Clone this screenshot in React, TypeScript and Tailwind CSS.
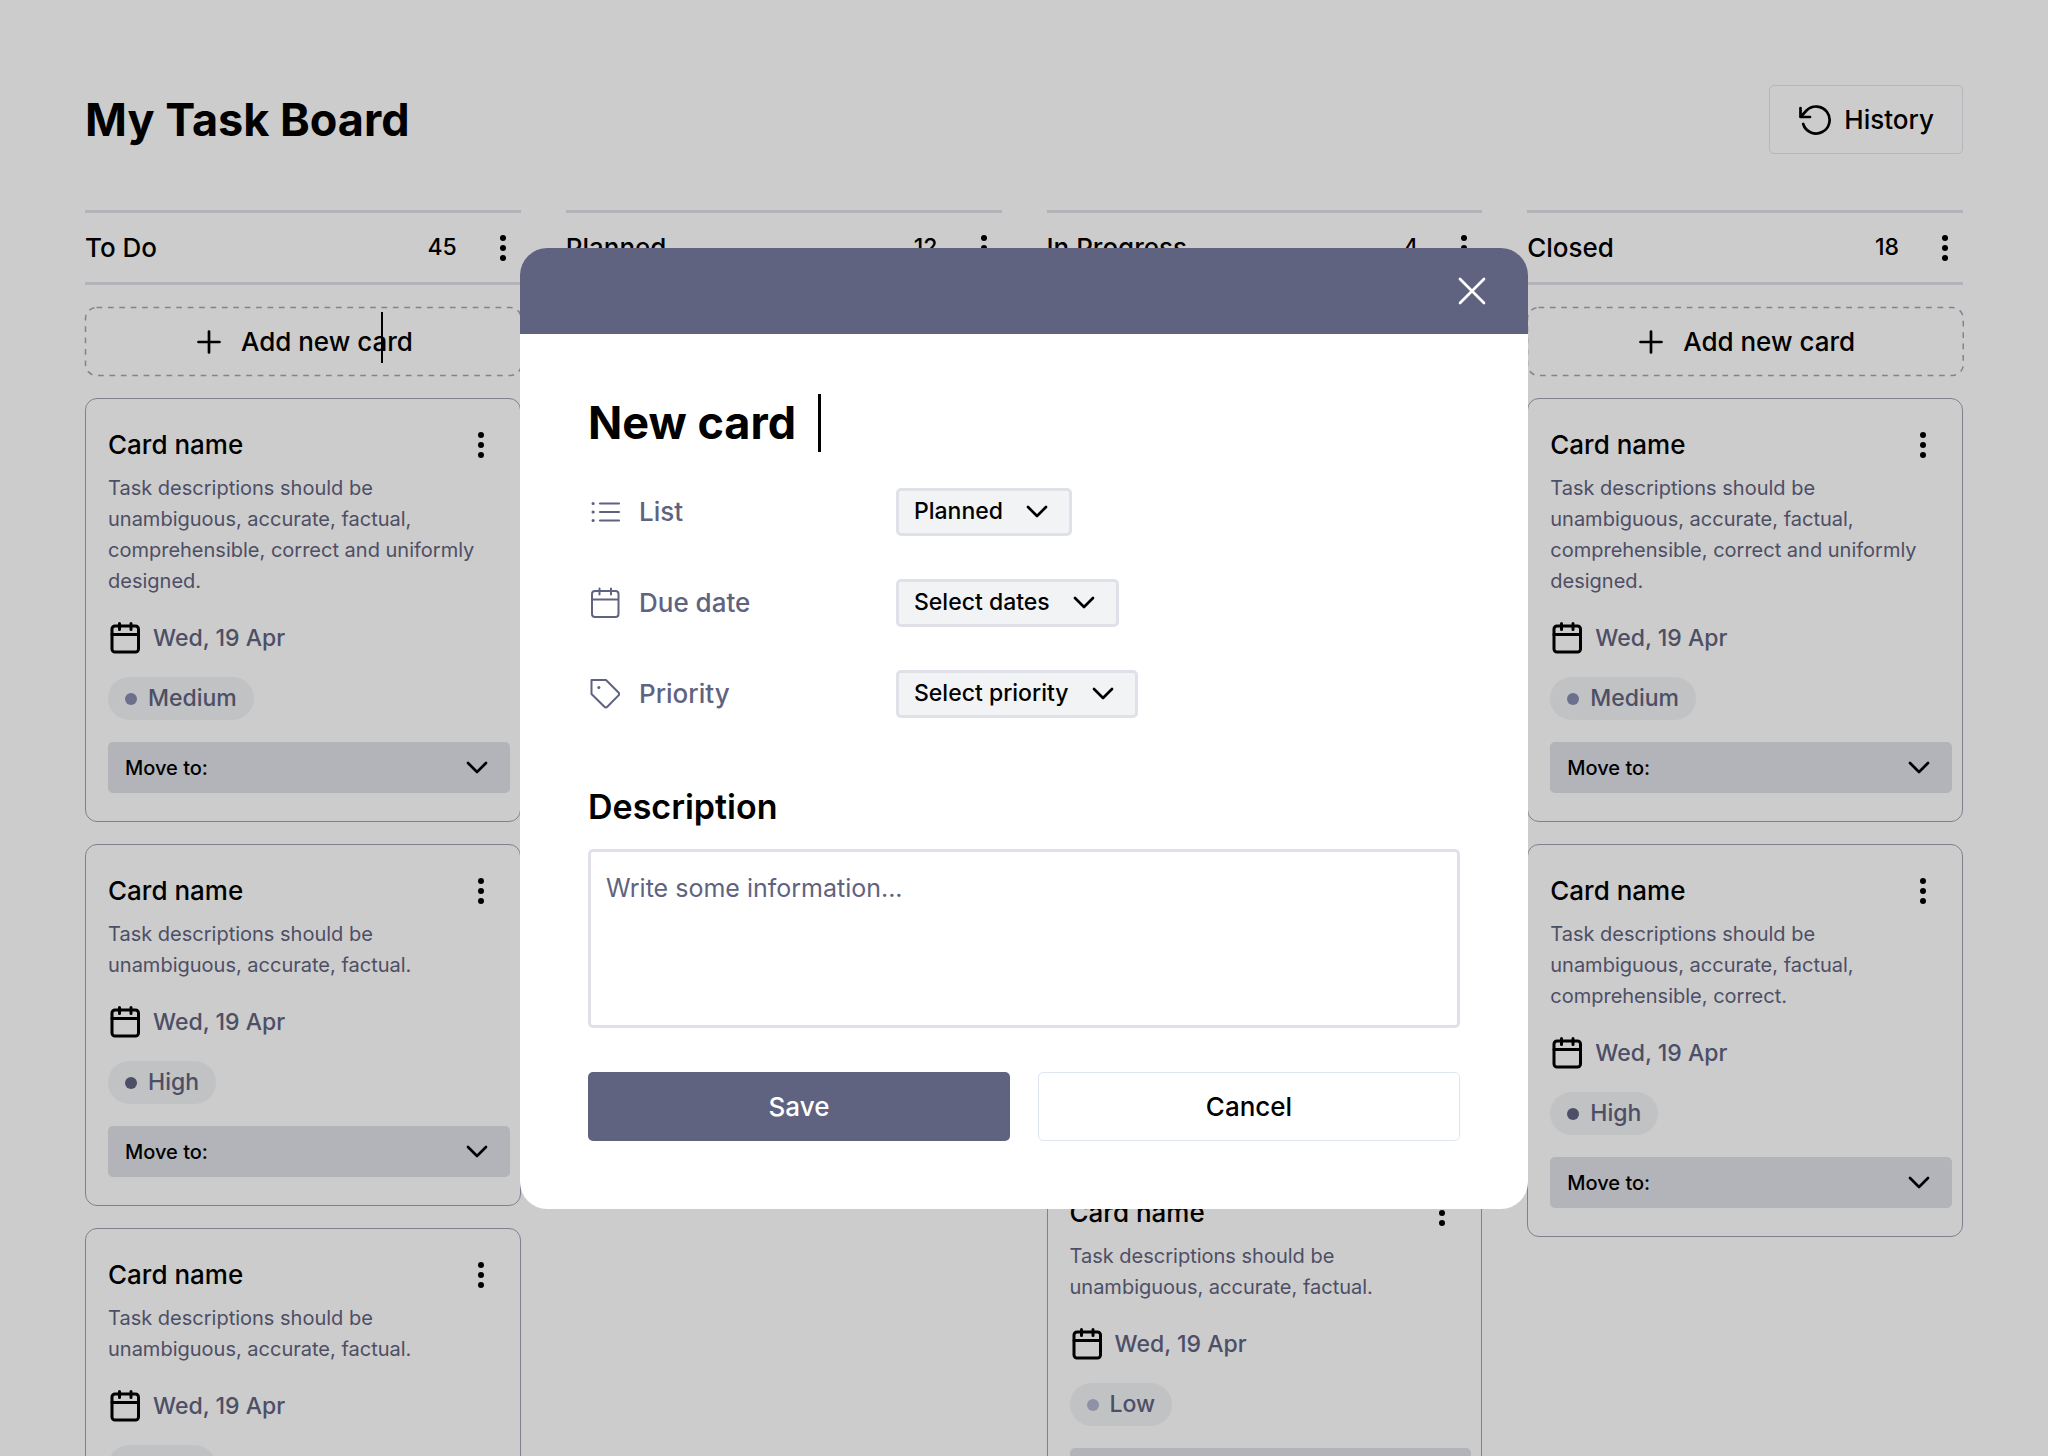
import type { ReactNode } from "react";

type Priority = "Low" | "Medium" | "High";
type Task = { text: string; priority: Priority };
type Column = { name: string; count: number; tasks: Task[]; caret?: boolean };

const LONG = "Task descriptions should be unambiguous, accurate, factual, comprehensible, correct and uniformly designed.";
const MID = "Task descriptions should be unambiguous, accurate, factual, comprehensible, correct.";
const SHORT = "Task descriptions should be unambiguous, accurate, factual.";

const columns: Column[] = [
  {
    name: "To Do",
    count: 45,
    caret: true,
    tasks: [
      { text: LONG, priority: "Medium" },
      { text: SHORT, priority: "High" },
      { text: SHORT, priority: "High" },
    ],
  },
  { name: "Planned", count: 12, tasks: [] },
  {
    name: "In Progress",
    count: 4,
    tasks: [
      { text: SHORT, priority: "High" },
      { text: SHORT, priority: "Medium" },
      { text: SHORT, priority: "Low" },
    ],
  },
  {
    name: "Closed",
    count: 18,
    tasks: [
      { text: LONG, priority: "Medium" },
      { text: MID, priority: "High" },
    ],
  },
];

const dotColor: Record<Priority, string> = {
  Low: "bg-[#b3b6d1]",
  Medium: "bg-[#888cb0]",
  High: "bg-[#5f6380]",
};

function Kebab() {
  return (
    <svg viewBox="0 0 8 28" className="h-7 w-2" fill="currentColor" aria-hidden="true">
      <circle cx="4" cy="4" r="3" />
      <circle cx="4" cy="14" r="3" />
      <circle cx="4" cy="24" r="3" />
    </svg>
  );
}

function Chevron({ className }: { className: string }) {
  return (
    <svg viewBox="0 0 22 14" className={className} fill="none" stroke="currentColor" strokeWidth="2.700" strokeLinecap="round" strokeLinejoin="round" aria-hidden="true">
      <path d="M2 2l9 9 9-9" />
    </svg>
  );
}

function CalendarIcon({ strokeWidth }: { strokeWidth: number }) {
  return (
    <svg viewBox="0 0 34 34" className="size-[34px] shrink-0" fill="none" stroke="currentColor" strokeWidth={strokeWidth} strokeLinecap="round" strokeLinejoin="round" aria-hidden="true">
      <rect x="4" y="5" width="26.500" height="26" rx="3" />
      <path d="M4 13.500h26M11.500 2.500v6M23 2.500v6" />
    </svg>
  );
}

function ListIcon() {
  return (
    <svg viewBox="0 0 34 34" className="size-[34px] shrink-0" fill="none" stroke="currentColor" strokeWidth="2.200" strokeLinecap="round" aria-hidden="true">
      <path d="M12 8.500h19M12 17h19M12 25.500h19" />
      <path d="M5 8.500h.2M5 17h.2M5 25.500h.2" strokeWidth="3" />
    </svg>
  );
}

function TagIcon() {
  return (
    <svg viewBox="0 0 34 34" className="size-[34px] shrink-0" fill="none" stroke="currentColor" strokeWidth="2" strokeLinecap="round" strokeLinejoin="round" aria-hidden="true">
      <path d="M3.500 3h14.500l12.500 12.500a2 2 0 0 1 0 2.900L19.300 29.800a2 2 0 0 1-2.900 0L3.500 17z" />
      <path d="M10.800 10.500h.1" strokeWidth="3" />
    </svg>
  );
}

function HistoryIcon() {
  return (
    <svg viewBox="0 0 34 34" className="size-[34px]" fill="none" stroke="currentColor" strokeWidth="2.700" strokeLinecap="round" strokeLinejoin="round" aria-hidden="true">
      <path d="M2.500 5v9h9.500" />
      <path d="M5.200 21A13.500 13.500 0 1 0 8.500 7.500L3 13.500" />
    </svg>
  );
}

function TaskCard({ task }: { task: Task }) {
  return (
    <article className="rounded-xl border border-[#9fa3b2] pt-7 pr-[10px] pb-7 pl-[22px]">
      <div className="flex h-9 items-center justify-between pr-[25px]">
        <h3 className="text-[26px] leading-9 font-medium">Card name</h3>
        <button type="button" aria-label="Card options">
          <Kebab />
        </button>
      </div>
      <p className="mt-[10px] pr-5 text-[20px] leading-[31px] text-[#5f6380]">{task.text}</p>
      <div className="mt-6 flex h-[34px] items-center gap-[11px] text-[23px]">
        <CalendarIcon strokeWidth={3} />
        <span className="font-medium text-[#5f6380]">Wed, 19 Apr</span>
      </div>
      <div className="mt-[22px] flex">
        <span className="flex h-[43px] items-center gap-[11px] rounded-full bg-[#f2f3f5] pr-[17px] pl-[17px] text-[23px] font-medium text-[#5f6380]">
          <span className={`size-3 rounded-full ${dotColor[task.priority]}`} />
          {task.priority}
        </span>
      </div>
      <div className="relative mt-[22px]">
        <select aria-label="Move card to another list" className="block h-[51px] w-full appearance-none rounded-[5px] bg-[#e0e1e8] pl-[17px] text-[20px] font-medium">
          <option>Move to:</option>
        </select>
        <Chevron className="pointer-events-none absolute top-1/2 right-[22px] h-[14px] w-[22px] -translate-y-1/2" />
      </div>
    </article>
  );
}

function BoardColumn({ column }: { column: Column }) {
  return (
    <section className="min-w-0">
      <header className="flex h-[75px] items-center border-y-[3px] border-[#e0e1e8] pr-[14px]">
        <h2 className="grow text-[26px] font-medium">{column.name}</h2>
        <span className="text-[23px] font-medium">{column.count}</span>
        <button type="button" aria-label={`${column.name} options`} className="ml-[42px]">
          <Kebab />
        </button>
      </header>
      <button type="button" className="relative mt-[22px] flex h-[69px] w-full items-center justify-center gap-5 pl-1 text-[26px] font-medium">
        <svg className="absolute inset-0 size-full overflow-visible" fill="none" stroke="#a0a4b8" strokeWidth="1.500" strokeDasharray="5.700 5.700" aria-hidden="true">
          <rect x="0.500" y="0.500" width="100%" height="68" rx="11" />
        </svg>
        <svg viewBox="0 0 24 24" className="size-6" fill="none" stroke="currentColor" strokeWidth="2.700" strokeLinecap="round" aria-hidden="true">
          <path d="M12 1.500v21M1.500 12h21" />
        </svg>
        <span className="relative">
          Add new card
          {column.caret && <span className="absolute top-[-10px] left-[140px] h-[51px] w-[2px] bg-black" />}
        </span>
      </button>
      <div className="mt-[22px] flex flex-col gap-[22px]">
        {column.tasks.map((task, i) => (
          <TaskCard key={i} task={task} />
        ))}
      </div>
    </section>
  );
}

function Field({ id, icon, label, value }: { id: string; icon: ReactNode; label: string; value: string }) {
  return (
    <div className="flex h-12 items-center">
      <label htmlFor={id} className="flex w-[308px] items-center gap-[17px] text-[26px] font-medium text-[#5f6380]">
        {icon}
        {label}
      </label>
      <div className="relative">
        <select id={id} className="block h-12 field-sizing-content appearance-none rounded-[5px] border-[3px] border-[#e0e1e8] bg-[#f2f3f5] pr-[66px] pl-[15px] text-[23px] font-medium">
          <option>{value}</option>
        </select>
        <Chevron className="pointer-events-none absolute top-1/2 right-6 h-[14px] w-[22px] -translate-y-1/2" />
      </div>
    </div>
  );
}

function NewCardDialog() {
  return (
    <div className="fixed inset-0 flex items-center justify-center bg-black/20">
      <form role="dialog" aria-modal="true" aria-label="New card" className="w-[1008px] overflow-hidden rounded-[27px] bg-white">
        <div className="flex h-[86px] items-center justify-end bg-[#5f6380] pr-[42px] text-white">
          <button type="button" aria-label="Close">
            <svg viewBox="0 0 28 28" className="size-7" fill="none" stroke="currentColor" strokeWidth="2.700" strokeLinecap="round" aria-hidden="true">
              <path d="M2 2l24 24M26 2L2 26" />
            </svg>
          </button>
        </div>
        <div className="px-[68px] pt-[60px] pb-[68px]">
          <div className="flex items-center">
            <input aria-label="Card name" defaultValue="New card" className="field-sizing-content h-[58px] text-[45px] font-bold outline-none" />
            <span className="ml-[22px] h-[58px] w-[3px] bg-black" />
          </div>
          <div className="mt-9 flex flex-col gap-[43px]">
            <Field id="list" icon={<ListIcon />} label="List" value="Planned" />
            <Field id="due" icon={<CalendarIcon strokeWidth={2} />} label="Due date" value="Select dates" />
            <Field id="priority" icon={<TagIcon />} label="Priority" value="Select priority" />
          </div>
          <label htmlFor="description" className="mt-[66px] block text-[34px] leading-[46px] font-semibold">
            Description
          </label>
          <textarea id="description" placeholder="Write some information..." className="mt-[19px] block h-[179px] w-full resize-none rounded-[5px] border-[3px] border-[#e0e1e8] px-[15px] pt-[18px] text-[25px] leading-9 placeholder:text-[#5f6380]" />
          <div className="mt-11 grid grid-cols-2 gap-7 text-[26px] font-medium">
            <button type="submit" className="h-[69px] rounded-[5px] bg-[#5f6380] text-white">
              Save
            </button>
            <button type="button" className="h-[69px] rounded-[5px] border border-[#dfe5ee]">
              Cancel
            </button>
          </div>
        </div>
      </form>
    </div>
  );
}

export default function App() {
  return (
    <div className="h-screen overflow-hidden bg-white font-['Inter',sans-serif] text-black">
      <main className="px-[85px] pt-[85px]">
        <header className="flex items-center justify-between">
          <h1 className="text-[45px] leading-[58px] font-bold">My Task Board</h1>
          <button type="button" className="flex h-[69px] items-center gap-3 rounded-[5px] border border-[#dfe5ee] px-7 text-[26px] font-medium">
            <HistoryIcon />
            History
          </button>
        </header>
        <div className="mt-14 grid grid-cols-4 gap-x-[45px]">
          {columns.map((column) => (
            <BoardColumn key={column.name} column={column} />
          ))}
        </div>
      </main>
      <NewCardDialog />
    </div>
  );
}
